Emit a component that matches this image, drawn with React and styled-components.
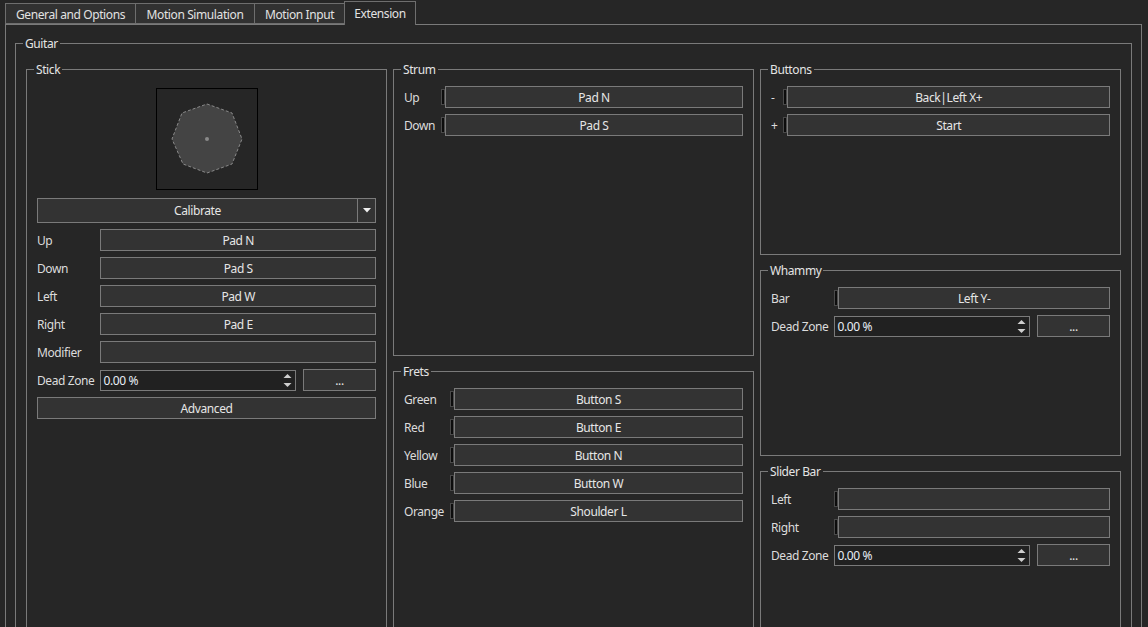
import React from "react";
import styled, { createGlobalStyle } from "styled-components";

const GlobalStyle = createGlobalStyle`
  html, body {
    margin: 0;
    padding: 0;
    background: #262626;
    overflow: hidden;
  }
  body {
    font-family: "Noto Sans", "Open Sans", sans-serif;
    font-size: 12px;
    letter-spacing: -0.4px;
    color: #dcdcdc;
  }
`;

const tabs = [
  { label: "General and Options", width: 131 },
  { label: "Motion Simulation", width: 120 },
  { label: "Motion Input", width: 91 },
  { label: "Extension", width: 72, active: true },
];

const App = () => {
  return (
    <Page>
      <GlobalStyle />
      <TabBar>
        {tabs.map((t) => (
          <Tab key={t.label} $w={t.width} $active={t.active}>
            {t.label}
          </Tab>
        ))}
      </TabBar>
      <Pane>
        <GroupBox $top={9}>
          <Legend>Guitar</Legend>
          <Columns>
            <Column>
              <GroupBox $grow>
                <Legend>Stick</Legend>
                <Stack>
                  <StickView>
                    <svg width="100" height="100" viewBox="0 0 100 100">
                      <polygon
                        points="50,15 75,24 85,50 75,75 50,84 26,75 15,50 25,24"
                        fill="#444444"
                        stroke="#8a8a8a"
                        strokeWidth="1"
                        strokeDasharray="3 2"
                      />
                      <circle cx="50" cy="50" r="2" fill="#8a8a8a" />
                    </svg>
                  </StickView>
                  <Combo>
                    <ComboText>Calibrate</ComboText>
                    <ComboArrow>
                      <svg width="8" height="5" viewBox="0 0 8 5">
                        <polygon points="0,0 8,0 4,4.5" fill="#f0f0f0" />
                      </svg>
                    </ComboArrow>
                  </Combo>
                  <Form>
                    <Label>Up</Label>
                    <BindButton>Pad N</BindButton>
                    <Label>Down</Label>
                    <BindButton>Pad S</BindButton>
                    <Label>Left</Label>
                    <BindButton>Pad W</BindButton>
                    <Label>Right</Label>
                    <BindButton>Pad E</BindButton>
                    <Label>Modifier</Label>
                    <BindButton />
                    <Label>Dead Zone</Label>
                    <DeadZone />
                  </Form>
                  <BindButton $block>Advanced</BindButton>
                </Stack>
              </GroupBox>
            </Column>

            <Column>
              <GroupBox $h={295}>
                <Legend>Strum</Legend>
                <Form>
                  <Label>Up</Label>
                  <Binding>Pad N</Binding>
                  <Label>Down</Label>
                  <Binding>Pad S</Binding>
                </Form>
              </GroupBox>
              <GroupBox $grow>
                <Legend>Frets</Legend>
                <Form>
                  <Label>Green</Label>
                  <Binding>Button S</Binding>
                  <Label>Red</Label>
                  <Binding>Button E</Binding>
                  <Label>Yellow</Label>
                  <Binding>Button N</Binding>
                  <Label>Blue</Label>
                  <Binding>Button W</Binding>
                  <Label>Orange</Label>
                  <Binding>Shoulder L</Binding>
                </Form>
              </GroupBox>
            </Column>

            <Column>
              <GroupBox $h={194}>
                <Legend>Buttons</Legend>
                <Form>
                  <Label>-</Label>
                  <Binding>Back|Left X+</Binding>
                  <Label>+</Label>
                  <Binding>Start</Binding>
                </Form>
              </GroupBox>
              <GroupBox $h={194}>
                <Legend>Whammy</Legend>
                <Form>
                  <Label>Bar</Label>
                  <Binding>Left Y-</Binding>
                  <Label>Dead Zone</Label>
                  <DeadZone />
                </Form>
              </GroupBox>
              <GroupBox $grow>
                <Legend>Slider Bar</Legend>
                <Form>
                  <Label>Left</Label>
                  <Binding />
                  <Label>Right</Label>
                  <Binding />
                  <Label>Dead Zone</Label>
                  <DeadZone />
                </Form>
              </GroupBox>
            </Column>
          </Columns>
        </GroupBox>
      </Pane>
    </Page>
  );
};

const Binding = ({ children }) => (
  <Field>
    <Indicator />
    <BindButton>{children}</BindButton>
  </Field>
);

const DeadZone = () => (
  <Field $gap={7}>
    <SpinBox>
      <SpinValue>0.00 %</SpinValue>
      <svg width="9" height="15" viewBox="0 0 9 15">
        <polygon points="0.5,5 8.5,5 4.5,1" fill="#cfcfcf" />
        <polygon points="0.5,10 8.5,10 4.5,14" fill="#cfcfcf" />
      </svg>
    </SpinBox>
    <SmallButton>...</SmallButton>
  </Field>
);

export default App;

const Page = styled.div`
  height: 627px;
  overflow: hidden;
`;

const TabBar = styled.div`
  display: flex;
  align-items: flex-end;
  height: 24px;
  padding-left: 5px;
  position: relative;
  z-index: 1;
`;

const Tab = styled.div`
  box-sizing: border-box;
  width: ${(p) => p.$w}px;
  height: ${(p) => (p.$active ? 24 : 21)}px;
  margin-left: -1px;
  margin-bottom: ${(p) => (p.$active ? -1 : 0)}px;
  border: 1px solid #6e6e6e;
  border-bottom: ${(p) => (p.$active ? "none" : "1px solid #6e6e6e")};
  background: ${(p) => (p.$active ? "#262626" : "#313131")};
  color: #e2e2e2;
  display: flex;
  align-items: center;
  justify-content: center;
  padding-top: ${(p) => (p.$active ? 0 : 1)}px;
  white-space: nowrap;

  &:first-child {
    margin-left: 0;
  }
`;

const Pane = styled.div`
  margin: 0 6px 0 5px;
  border: 1px solid #7a7a7a;
  padding: 10px 9px;
  height: 700px;
`;

const GroupBox = styled.fieldset`
  box-sizing: border-box;
  margin: 0;
  padding: ${(p) => p.$top || 8}px 10px 10px;
  border: 1px solid #7a7a7a;
  min-width: 0;
  height: ${(p) => (p.$h ? `${p.$h}px` : "auto")};
  flex: ${(p) => (p.$grow ? "1" : "none")};
`;

const Legend = styled.legend`
  padding: 0 2px;
  margin-left: -3px;
  line-height: 17px;
  color: #e4e4e4;
`;

const Columns = styled.div`
  display: grid;
  grid-template-columns: repeat(3, 1fr);
  column-gap: 6px;
  height: 640px;
`;

const Column = styled.div`
  display: flex;
  flex-direction: column;
  gap: 7px;
  min-width: 0;
`;

const Stack = styled.div`
  display: flex;
  flex-direction: column;
  gap: 6px;
`;

const StickView = styled.div`
  box-sizing: border-box;
  width: 102px;
  height: 102px;
  margin: 2px 0 2px;
  align-self: center;
  border: 1px solid #000;
  display: flex;
  align-items: center;
  justify-content: center;
`;

const Combo = styled.div`
  box-sizing: border-box;
  height: 25px;
  display: flex;
  border: 1px solid #7a7a7a;
  background: #333333;
`;

const ComboText = styled.div`
  flex: 1;
  display: flex;
  align-items: center;
  justify-content: center;
  color: #e6e6e6;
`;

const ComboArrow = styled.div`
  width: 17px;
  border-left: 1px solid #7a7a7a;
  display: flex;
  align-items: center;
  justify-content: center;
`;

const Form = styled.div`
  display: grid;
  grid-template-columns: auto 1fr;
  column-gap: 6px;
  row-gap: 6px;
  align-items: center;
`;

const Label = styled.span`
  white-space: nowrap;
  color: #dcdcdc;
`;

const Field = styled.div`
  display: flex;
  align-items: center;
  gap: ${(p) => p.$gap || 0}px;
  min-width: 0;
`;

const Indicator = styled.div`
  box-sizing: border-box;
  width: 4px;
  height: 16px;
  background: #0c0c0c;
  border: 1px solid #4a4a4a;
`;

const BindButton = styled.div`
  box-sizing: border-box;
  flex: ${(p) => (p.$block ? "none" : "1")};
  height: 22px;
  border: 1px solid #7a7a7a;
  background: #333333;
  color: #e6e6e6;
  display: flex;
  align-items: center;
  justify-content: center;
  white-space: nowrap;
`;

const SpinBox = styled.div`
  box-sizing: border-box;
  flex: 1;
  height: 21px;
  border: 1px solid #7a7a7a;
  background: #212121;
  display: flex;
  align-items: center;
  padding: 0 3px 0 2px;
`;

const SpinValue = styled.span`
  flex: 1;
  color: #e8eef6;
`;

const SmallButton = styled.div`
  box-sizing: border-box;
  width: 73px;
  height: 22px;
  border: 1px solid #7a7a7a;
  background: #333333;
  color: #e6e6e6;
  display: flex;
  align-items: center;
  justify-content: center;
`;
